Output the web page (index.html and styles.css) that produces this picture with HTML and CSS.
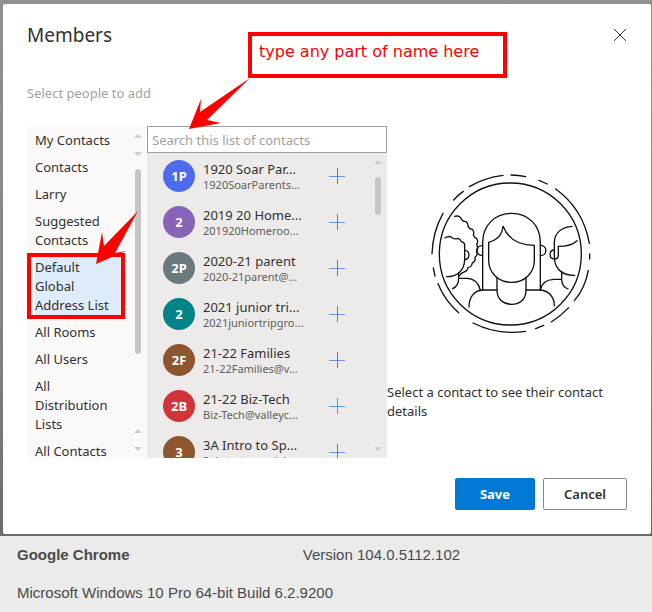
FILE: index.html
```html
<!DOCTYPE html>
<html lang="en">
<head>
    <meta charset="UTF-8">
    <meta name="viewport" content="width=device-width, initial-scale=1.0">
    <title>Members</title>
    <link rel="stylesheet" href="styles.css">
</head>
<body>
    <div class="backdrop">
        <div class="dialog" role="dialog" aria-labelledby="title">
            <header class="dialog-header">
                <h1 id="title">Members</h1>
                <button class="close" type="button" aria-label="Close">
                    <svg width="14" height="14" viewBox="0 0 14 14"><path d="M1 1l12 12M13 1L1 13"/></svg>
                </button>
            </header>
            <p class="subtitle">Select people to add</p>

            <div class="picker">
                <nav class="folders">
                    <ul class="folder-list">
                        <li><a href="#">My Contacts</a></li>
                        <li><a href="#">Contacts</a></li>
                        <li><a href="#">Larry</a></li>
                        <li><a href="#">Suggested Contacts</a></li>
                        <li class="selected">
                            <a href="#">Default Global Address List</a>
                            <span class="marker"></span>
                            <svg class="marker-arrow" width="44" height="54" viewBox="95 211 44 54"><path d="M96 264L102 232L104 246L138 211L115 253L126 251Z"/></svg>
                        </li>
                        <li><a href="#">All Rooms</a></li>
                        <li><a href="#">All Users</a></li>
                        <li><a href="#">All Distribution Lists</a></li>
                        <li><a href="#">All Contacts</a></li>
                    </ul>
                    <div class="scrollbar">
                        <span class="arrow up"></span>
                        <span class="arrow down"></span>
                        <span class="thumb thumb-long"></span>
                        <span class="arrow up last"></span>
                        <span class="arrow down"></span>
                    </div>
                </nav>

                <section class="people">
                    <input class="search" type="text" placeholder="Search this list of contacts" aria-label="Search this list of contacts">
                    <div class="people-body">
                        <ul class="people-list">
                            <li>
                                <span class="avatar blue">1P</span>
                                <div class="person"><span class="name">1920 Soar Par...</span><span class="mail">1920SoarParents...</span></div>
                                <button class="add" type="button" aria-label="Add 1920 Soar Par"><svg width="16" height="16" viewBox="0 0 16 16"><path class="bar" d="M0 8.5h16"/><path d="M8.5 0v16"/></svg></button>
                            </li>
                            <li>
                                <span class="avatar purple">2</span>
                                <div class="person"><span class="name">2019 20 Home...</span><span class="mail">201920Homeroo...</span></div>
                                <button class="add" type="button" aria-label="Add 2019 20 Home"><svg width="16" height="16" viewBox="0 0 16 16"><path class="bar" d="M0 8.5h16"/><path d="M8.5 0v16"/></svg></button>
                            </li>
                            <li>
                                <span class="avatar slate">2P</span>
                                <div class="person"><span class="name">2020-21 parent</span><span class="mail">2020-21parent@...</span></div>
                                <button class="add" type="button" aria-label="Add 2020-21 parent"><svg width="16" height="16" viewBox="0 0 16 16"><path class="bar" d="M0 8.5h16"/><path d="M8.5 0v16"/></svg></button>
                            </li>
                            <li>
                                <span class="avatar teal">2</span>
                                <div class="person"><span class="name">2021 junior tri...</span><span class="mail">2021juniortripgro...</span></div>
                                <button class="add" type="button" aria-label="Add 2021 junior tri"><svg width="16" height="16" viewBox="0 0 16 16"><path class="bar" d="M0 8.5h16"/><path d="M8.5 0v16"/></svg></button>
                            </li>
                            <li>
                                <span class="avatar brown">2F</span>
                                <div class="person"><span class="name">21-22 Families</span><span class="mail">21-22Families@v...</span></div>
                                <button class="add" type="button" aria-label="Add 21-22 Families"><svg width="16" height="16" viewBox="0 0 16 16"><path class="bar" d="M0 8.5h16"/><path d="M8.5 0v16"/></svg></button>
                            </li>
                            <li>
                                <span class="avatar red">2B</span>
                                <div class="person"><span class="name">21-22 Biz-Tech</span><span class="mail">Biz-Tech@valleyc...</span></div>
                                <button class="add bright" type="button" aria-label="Add 21-22 Biz-Tech"><svg width="16" height="16" viewBox="0 0 16 16"><path class="bar" d="M0 8.5h16"/><path d="M8.5 0v16"/></svg></button>
                            </li>
                            <li>
                                <span class="avatar brown">3</span>
                                <div class="person"><span class="name">3A Intro to Sp...</span><span class="mail">3aintrotospecial...</span></div>
                                <button class="add" type="button" aria-label="Add 3A Intro to Sp"><svg width="16" height="16" viewBox="0 0 16 16"><path class="bar" d="M0 8.5h16"/><path d="M8.5 0v16"/></svg></button>
                            </li>
                        </ul>
                        <div class="scrollbar">
                            <span class="arrow up"></span>
                            <span class="thumb thumb-short"></span>
                            <span class="arrow down last"></span>
                        </div>
                    </div>
                </section>

                <section class="details">
                    <svg class="illustration" width="180" height="180" viewBox="-9 0 540 540">
                        <circle cx="271" cy="282" r="213"/>
                        <!-- broken outer ring -->
                        <path d="M273 45Q296 45 317 50M357 61L382 72M407 87Q490 147 508 250M509 282V297M505 331Q495 385 463 422M446 443Q423 468 394 486M371 496L347 506M316 514Q235 527 159 489M116 458Q74 421 54 371M45 348L40 324M36 281Q38 216 69 160M101 120Q114 105 130 94M148 80Q193 53 249 46"/>
                        <!-- front person -->
                        <path d="M188 390V248C188 195 226 160 275 160S361 195 361 248V390"/>
                        <path d="M206 247Q246 236 249 198Q271 256 343 256V301C343 340 313 367 275 367S206 340 206 301Z"/>
                        <path d="M188 256C164 258 164 287 188 286M361 256C383 256 383 287 361 287"/>
                        <path d="M231 352V390C231 417 249 433 275 433S318 417 318 390V352"/>
                        <path d="M231 390H188C163 391 147 411 147 441M318 390H361C387 392 403 412 403 437"/>
                        <!-- left person -->
                        <path d="M104 169Q117 166 122 173Q126 184 138 185Q145 190 144 198Q147 207 157 208Q164 216 160 225Q163 232 170 236Q176 244 170 253Q175 264 171 274Q174 285 165 292Q168 305 157 309Q155 321 144 323Q142 334 132 336Q125 337 118 347"/>
                        <path d="M75 234Q89 225 97 234Q106 239 114 235Q121 237 124 245Q133 247 134 254V299C133 331 112 350 80 350"/>
                        <path d="M134 271C151 269 151 300 134 299M116 337V355C116 372 110 381 98 386M116 355H140C162 355 175 368 181 390"/>
                        <!-- right person -->
                        <path d="M456 199C425 201 403 219 403 248V293C405 329 429 347 464 346"/>
                        <path d="M471 242Q454 259 415 259V287Q414 297 403 297C386 297 386 270 403 270"/>
                        <path d="M425 334V358C425 374 431 382 444 387M425 358H401C379 359 365 371 361 390"/>
                    </svg>
                    <p>Select a contact to see their contact details</p>
                </section>
            </div>

            <footer class="actions">
                <button class="btn primary" type="button">Save</button>
                <button class="btn" type="button">Cancel</button>
            </footer>

            <div class="callout">
                type any part of name here
                <svg class="callout-arrow" width="62" height="54" viewBox="189 77 62 54"><path d="M189 129L201 99L200 112L250 78L207 120L221 123Z"/></svg>
            </div>
        </div>
    </div>

    <div class="system">
        <strong>Google Chrome</strong>
        <span>Version 104.0.5112.102</span>
        <span class="os">Microsoft Windows 10 Pro 64-bit Build 6.2.9200</span>
    </div>
</body>
</html>
```
FILE: styles.css
```css
* {
    box-sizing: border-box;
}
body {
    margin: 0;
    background-color: #ebebeb;
    color: #323130;
    font-family: "Noto Sans", "Open Sans", sans-serif;
    font-size: 13px;
    line-height: 19px;
}
ul, p, h1 {
    margin: 0;
    padding: 0;
    list-style: none;
}
a {
    color: inherit;
    text-decoration: none;
}
button {
    font: inherit;
    color: inherit;
    padding: 0;
    border: 0;
    background: none;
    cursor: pointer;
}
svg {
    display: block;
}
.backdrop {
    padding: 4px 1px 2px 3px;
    background: linear-gradient(#919191, #858585 60%, #6c6c6c);
}
.dialog {
    position: relative;
    padding: 16px 24px 24px;
    background-color: #fff;
    border-radius: 2px;
}
.dialog-header {
    display: flex;
    justify-content: space-between;
    align-items: center;
    height: 30px;
}
.dialog-header h1 {
    font-size: 19px;
    font-weight: 400;
    line-height: 30px;
}
.close path {
    stroke: #323130;
    fill: none;
}
.subtitle {
    margin: 34px 0 23px;
    color: #a19f9d;
}
.picker {
    display: flex;
    height: 332px;
}

/* folders */
.folders {
    display: flex;
    width: 120px;
    padding-top: 1px;
    padding-left: 8px;
    background-color: #faf9f8;
}
.folder-list {
    width: 86px;
}
.folder-list li {
    position: relative;
    padding: 4px 0;
}
.folder-list li a {
    display: block;
}
.folder-list .selected {
    background-color: #deecf9;
}
.marker {
    position: absolute;
    inset: -1px -4px 0 -8px;
    border: 4px solid #fe0000;
}
.marker-arrow {
    position: absolute;
    left: 60px;
    top: -43px;
    z-index: 1;
    fill: #fe0000;
}

/* drawn scrollbars */
.scrollbar {
    display: flex;
    flex-direction: column;
    align-items: center;
    width: 18px;
    margin-left: auto;
}
.arrow {
    display: flex;
    align-items: center;
    height: 18px;
}
.arrow::before {
    content: "";
    border: 4px solid transparent;
}
.arrow.up::before {
    border-top: 0;
    border-bottom-color: #c8d0d4;
}
.arrow.down::before {
    border-bottom: 0;
    border-top-color: #c8d0d4;
}
.thumb {
    width: 6px;
    margin-top: 6px;
    border-radius: 3px;
    background-color: #c8c6c4;
}
.thumb-long {
    height: 185px;
}
.thumb-short {
    height: 38px;
}
.last {
    margin-top: auto;
}

/* people */
.people {
    display: flex;
    flex-direction: column;
    width: 240px;
    background-color: #edebe9;
}
.search {
    height: 27px;
    width: 100%;
    padding: 0 4px;
    border: 1px solid #a19f9d;
    background-color: #fff;
    font: inherit;
}
.search::placeholder {
    color: #a19f9d;
    opacity: 1;
}
.people-body {
    display: flex;
    flex: 1;
    min-height: 0;
    overflow: hidden;
}
.people-list li {
    display: flex;
    align-items: center;
    height: 46px;
    padding-left: 16px;
}
.avatar {
    width: 32px;
    height: 32px;
    border-radius: 50%;
    color: #fff;
    font-weight: 700;
    line-height: 32px;
    text-align: center;
}
.blue { background-color: #4f6bed; }
.purple { background-color: #8764b8; }
.slate { background-color: #69797e; }
.teal { background-color: #038387; }
.brown { background-color: #8e562e; }
.red { background-color: #d13438; }
.person {
    width: 126px;
    padding: 2px 0 0 8px;
    white-space: nowrap;
}
.name, .mail {
    display: block;
    line-height: 16px;
}
.mail {
    color: #605e5c;
    font-size: 11px;
}
.add {
    width: 32px;
    height: 16px;
    padding-left: 8px;
}
.add path {
    stroke: #7a68d0;
    fill: none;
}
.add .bar {
    stroke: #6c94dc;
}
.add.bright path {
    stroke: #4a9ee0;
}

/* details */
.details {
    flex: 1;
    padding-top: 34px;
}
.illustration {
    margin: 0 auto 43px;
    fill: none;
    stroke: #111;
    stroke-width: 4;
    stroke-linecap: round;
}

.actions {
    display: flex;
    justify-content: flex-end;
    gap: 8px;
    margin-top: 20px;
}
.btn {
    min-width: 84px;
    height: 32px;
    border: 1px solid #8a8886;
    border-radius: 2px;
    font-weight: 600;
}
.btn.primary {
    min-width: 80px;
    border-color: #0078d4;
    background-color: #0078d4;
    color: #fff;
    font-weight: 700;
}

.callout {
    position: absolute;
    left: 245px;
    top: 28px;
    width: 259px;
    height: 46px;
    padding: 6px 7px;
    border: 4px solid #fe0000;
    background-color: #fff;
    color: #fe0000;
    font-family: "DejaVu Sans", "Noto Sans", sans-serif;
    font-size: 16px;
    line-height: 20px;
    white-space: nowrap;
}
.callout-arrow {
    position: absolute;
    left: -63px;
    top: 41px;
    fill: #fe0000;
}

.system {
    display: grid;
    grid-template-columns: 45% 1fr;
    padding-left: 17px;
    color: #4a4a4a;
    font-family: "Liberation Sans", Arial, sans-serif;
    font-size: 15px;
    line-height: 38px;
}
.os {
    grid-column: 1 / 3;
}
```
